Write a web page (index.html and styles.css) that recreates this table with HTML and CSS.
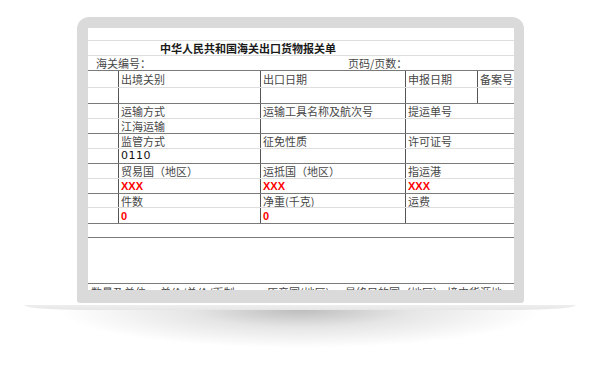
FILE: index.html
```html
<!DOCTYPE html>
<html lang="zh">
<head>
<meta charset="utf-8">
<link rel="stylesheet" href="styles.css">
</head>
<body>
<div class="stage">
  <div class="frame">
    <div class="screen">
      <div class="row h12"></div>
      <div class="row h14 title"><span>中华人民共和国海关出口货物报关单</span></div>
      <div class="row h14 dk head"><span class="hno">海关编号：</span><span>页码/页数：</span></div>

      <div class="row t h16"><div class="c0"></div><div class="c">出境关别</div><div class="c">出口日期</div><div class="c">申报日期</div><div class="c">备案号</div></div>
      <div class="row t h15 dk"><div class="c0"></div><div class="c"></div><div class="c"></div><div class="c"></div><div class="c"></div></div>

      <div class="row t h14"><div class="c0"></div><div class="c">运输方式</div><div class="c">运输工具名称及航次号</div><div class="c w">提运单号</div></div>
      <div class="row t h14 dk"><div class="c0"></div><div class="c">江海运输</div><div class="c"></div><div class="c w"></div></div>

      <div class="row t h14"><div class="c0"></div><div class="c">监管方式</div><div class="c">征免性质</div><div class="c w">许可证号</div></div>
      <div class="row t h14 dk"><div class="c0"></div><div class="c num">0110</div><div class="c"></div><div class="c w"></div></div>

      <div class="row t h14"><div class="c0"></div><div class="c">贸易国（地区）</div><div class="c">运抵国（地区）</div><div class="c w">指运港</div></div>
      <div class="row t h14 dk"><div class="c0"></div><div class="c red">XXX</div><div class="c red">XXX</div><div class="c w red">XXX</div></div>

      <div class="row t h13"><div class="c0"></div><div class="c">件数</div><div class="c">净重(千克)</div><div class="c w">运费</div></div>
      <div class="row t h15 dk"><div class="c0"></div><div class="c red">0</div><div class="c red">0</div><div class="c w"></div></div>

      <div class="row h13 dk"></div>
      <div class="row h45 dk"></div>
      <div class="row foot"><span>数量及单位</span><span>单价/总价/币制</span><span>原产国(地区)</span><span>最终目的国（地区）</span><span>境内货源地</span></div>
    </div>
  </div>
  <div class="base"></div>
  <div class="shadow"></div>
</div>
</body>
</html>
```
FILE: styles.css
```css
html, body {
  margin: 0;
  padding: 0;
  background: #ffffff;
}
body {
  width: 600px;
  height: 367px;
  overflow: hidden;
}
.stage {
  padding-top: 17px;
  display: flex;
  flex-direction: column;
  align-items: center;
}
.frame {
  width: 447px;
  height: 286px;
  box-sizing: border-box;
  margin-left: 1px;
  background: #dadada;
  border-radius: 12px 12px 3px 3px;
  padding: 11px 10px 13px 11px;
}
.screen {
  background: #ffffff;
  height: 100%;
  overflow: hidden;
  font-family: "Noto Sans CJK SC", "Noto Sans", sans-serif;
  font-size: 11px;
  color: #474747;
}
.row {
  border-bottom: 1px solid #dedede;
  display: flex;
  align-items: center;
  line-height: 12px;
  white-space: nowrap;
}
.row.dk {
  border-bottom-color: #7a7a7a;
}
.h12 { height: 12px; }
.h13 { height: 13px; }
.h14 { height: 14px; }
.h15 { height: 15px; }
.h16 { height: 16px; }
.h45 { height: 45px; }

.title {
  padding-left: 72px;
  font-weight: 700;
  color: #1a1a1a;
}
.head {
  display: grid;
  grid-template-columns: 252px 1fr;
  padding-left: 8px;
}
.row.t {
  display: grid;
  grid-template-columns: 30px 142px 145px 72px 1fr;
  align-items: stretch;
}
.c {
  border-left: 1px solid #555555;
  padding-left: 2px;
  display: flex;
  align-items: center;
  overflow: hidden;
}
.c.w {
  grid-column: span 2;
}
.num {
  font-family: "DejaVu Sans", sans-serif;
  font-size: 11px;
  color: #111111;
  letter-spacing: 0.5px;
}
.red {
  font-family: "Liberation Sans", Arial, sans-serif;
  font-weight: 700;
  font-size: 11px;
  color: #ff0000;
}
.foot {
  display: grid;
  grid-template-columns: 69px 107px 78px 102px 1fr;
  padding-left: 3px;
  padding-top: 2px;
  border-bottom: none;
  align-items: start;
}
.base {
  width: 552px;
  height: 5px;
  margin-top: 2px;
  background: linear-gradient(#eeeeee, #e6e6e6);
  border-radius: 0 0 60px 60px / 0 0 5px 5px;
}
.shadow {
  width: 480px;
  height: 38px;
  background: radial-gradient(ellipse 50% 100% at 50% 0%, rgba(0,0,0,0.26), rgba(0,0,0,0.1) 45%, rgba(0,0,0,0) 100%);
}
```
